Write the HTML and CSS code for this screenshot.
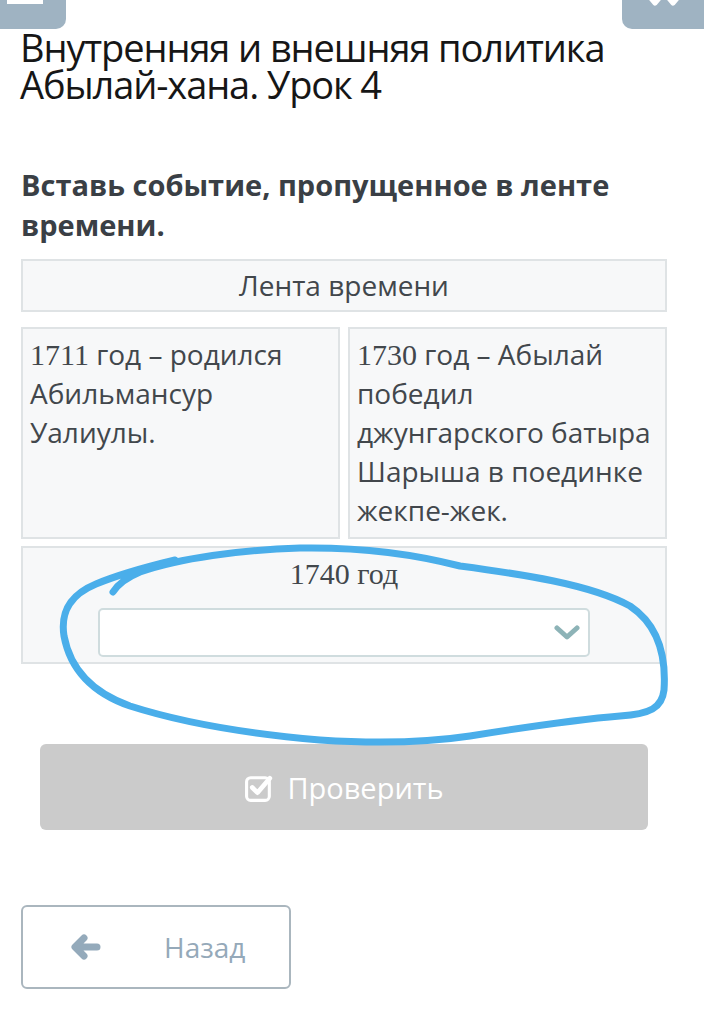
FILE: index.html
```html
<!DOCTYPE html>
<html lang="ru">
<head>
    <meta charset="UTF-8">
    <meta name="viewport" content="width=device-width, initial-scale=1.0">
    <title>Абылай-хан. Урок 4</title>
    <link rel="stylesheet" href="styles.css">
</head>
<body>
    <div class="topbar">
        <div class="tab tab-left"><span class="tab-icon"></span></div>
        <div class="tab tab-right">
            <svg width="40" height="8" viewBox="0 0 40 8">
                <path d="M3 -4 L9 3 L15 -4 M21 -4 L27 3 L33 -4" fill="none" stroke="#fff" stroke-width="5" stroke-linecap="round" stroke-linejoin="round"/>
            </svg>
        </div>
    </div>

    <h1 class="lesson-title">Внутренняя и внешняя политика Абылай-хана. Урок 4</h1>

    <div class="task">
        <p class="question">Вставь событие, пропущенное в ленте времени.</p>

        <div class="timeline">
            <div class="cell head">Лента времени</div>
            <div class="row">
                <div class="cell"><span class="num">1711</span> год – родился Абильмансур Уалиулы.</div>
                <div class="cell"><span class="num">1730</span> год – Абылай победил джунгарского батыра Шарыша в поединке жекпе-жек.</div>
            </div>
            <div class="cell gap-cell">
                <div class="year">1740 год</div>
                <div class="select">
                    <svg class="chevron" width="26" height="16" viewBox="0 0 26 16">
                        <path d="M3 3 L13 12 L23 3" fill="none" stroke="#8db3b7" stroke-width="5" stroke-linecap="round" stroke-linejoin="round"/>
                    </svg>
                </div>
            </div>
        </div>

        <button class="check-btn" type="button">
            <svg width="31" height="31" viewBox="0 0 30 30">
                <rect x="2.5" y="5.5" width="22" height="22" rx="4" fill="none" stroke="#fff" stroke-width="3"/>
                <path d="M8 15 L13 20 L25 6" fill="none" stroke="#fff" stroke-width="4.5" stroke-linecap="round" stroke-linejoin="round"/>
            </svg>
            Проверить
        </button>
    </div>

    <div class="nav">
        <button class="back-btn" type="button">
            <svg width="32" height="26" viewBox="0 0 32 26">
                <path d="M14 4 L5 13 L14 22 M6 13 L27 13" fill="none" stroke="#94aabb" stroke-width="7" stroke-linecap="round" stroke-linejoin="round"/>
            </svg>
            <span>Назад</span>
        </button>
    </div>

    <!-- hand-drawn mark over the empty slot -->
    <svg class="scribble" width="704" height="230" viewBox="0 530 704 230">
        <path d="M113 592 C118 584 128 577 140 572 C180 558 240 550 300 548 C360 547 410 553 460 566 C520 574 590 584 630 606 C660 626 666 660 664 690 C662 708 650 714 620 716 C570 720 520 728 470 736 C430 742 380 744 320 740 C250 734 180 722 130 706 C90 692 70 668 64 636 C60 610 72 594 96 584 C120 574 150 566 175 560" fill="none" stroke="#4aaeea" stroke-width="7" stroke-linecap="round" stroke-linejoin="round"/>
    </svg>
</body>
</html>
```

FILE: styles.css
```css
body {
    margin: 0;
    font-family: "Open Sans", "Liberation Sans", sans-serif;
    background: #fff;
    color: #111;
    position: relative;
}

/* Top tabs, cut by the screen edge */
.topbar {
    display: flex;
    justify-content: space-between;
    height: 29px;
}

.tab {
    background: #9fb3c2;
    height: 29px;
}

.tab-left {
    width: 66px;
    border-bottom-right-radius: 10px;
    display: flex;
    padding-left: 7px;
    box-sizing: border-box;
}

.tab-icon {
    width: 36px;
    height: 4px;
    background: #fff;
}

.tab-right {
    width: 82px;
    border-bottom-left-radius: 10px;
    display: flex;
    justify-content: center;
    padding-left: 6px;
    box-sizing: border-box;
}

.lesson-title {
    font-weight: 400;
    font-size: 38px;
    letter-spacing: -1.1px;
    line-height: 37px;
    margin: 0 20px;
    color: #161616;
}

.task {
    padding: 0 37px 0 21px;
}

.question {
    font-weight: 700;
    font-size: 29px;
    line-height: 40px;
    color: #3a3f45;
    margin: 62px 0 14px;
}

.timeline {
    display: flex;
    flex-direction: column;
    gap: 15px;
}

.cell {
    background: #f7f8f9;
    border: 2px solid #dfe3e5;
    color: #42474c;
    font-size: 28px;
    line-height: 39px;
    padding: 5px 6px;
}

.cell.head {
    text-align: center;
}

.row {
    display: flex;
    gap: 8px;
    margin-bottom: -8px;
}

.row .cell {
    flex: 1;
    padding: 6px 5px 7px 7px;
}

.num, .year {
    font-family: "Liberation Serif", "Times New Roman", serif;
    font-size: 30px;
}

.num {
    line-height: 1;
}

.gap-cell {
    text-align: center;
    padding: 6px 0 5px;
}

.year {
    line-height: 40px;
}

.select {
    margin: 14px 75px 0 75px;
    height: 45px;
    background: #fff;
    border: 2px solid #cfdcde;
    border-radius: 5px;
    display: flex;
    justify-content: flex-end;
    align-items: center;
    padding-right: 8px;
}

.scribble {
    position: absolute;
    left: 0;
    top: 530px;
    pointer-events: none;
}

.check-btn {
    display: flex;
    align-items: center;
    justify-content: center;
    gap: 12px;
    width: 608px;
    height: 86px;
    margin: 80px 0 0 19px;
    background: #cbcbcb;
    border: none;
    border-radius: 6px;
    color: #fff;
    font-family: inherit;
    font-size: 29px;
    padding: 0;
}

.nav {
    padding: 75px 21px 0;
}

.back-btn {
    display: flex;
    align-items: center;
    width: 270px;
    height: 84px;
    background: #fff;
    border: 2px solid #aab6be;
    border-radius: 6px;
    color: #95a9b9;
    font-family: inherit;
    font-size: 28px;
    padding: 0 0 0 47px;
    gap: 62px;
}
```
